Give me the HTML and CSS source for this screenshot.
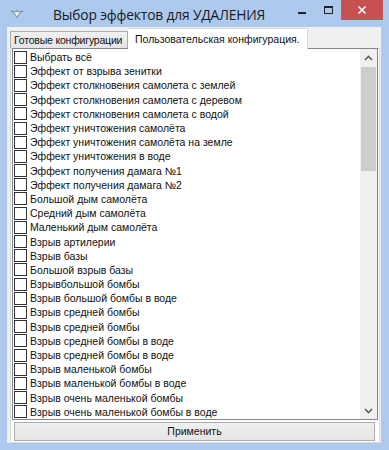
FILE: index.html
```html
<!DOCTYPE html>
<html>
<head>
<meta charset="utf-8">
<link rel="stylesheet" href="styles.css">
</head>
<body>
<div class="window">
  <div class="titlebar">
    <svg class="app-icon" width="14" height="10" viewBox="0 0 14 10">
      <path d="M1 2 L6 3 L7 1 L8 3 L13 2 L9 5 L7 9 L5 5 Z" fill="#e8eef6" stroke="#6b7c90" stroke-width="0.8"/>
    </svg>
    <div class="title">Выбор эффектов для УДАЛЕНИЯ</div>
    <div class="controls">
      <span class="btn-min"></span>
      <span class="btn-max"></span>
      <span class="btn-close">
        <svg width="10" height="10" viewBox="0 0 10 10"><path d="M1.5 1.5 L8.5 8.5 M8.5 1.5 L1.5 8.5" stroke="#fff" stroke-width="1.6"/></svg>
      </span>
    </div>
  </div>
  <div class="client">
    <div class="tabs">
      <div class="tab">Готовые конфигурации</div>
      <div class="tab active">Пользовательская конфигурация.</div>
    </div>
    <div class="panel">
      <div class="listbox">
        <div class="items">
          <div class="item"><span class="cb"></span>Выбрать всё</div>
          <div class="item"><span class="cb"></span>Эффект от взрыва зенитки</div>
          <div class="item"><span class="cb"></span>Эффект столкновения самолета с землей</div>
          <div class="item"><span class="cb"></span>Эффект столкновения самолета с деревом</div>
          <div class="item"><span class="cb"></span>Эффект столкновения самолета с водой</div>
          <div class="item"><span class="cb"></span>Эффект уничтожения самолёта</div>
          <div class="item"><span class="cb"></span>Эффект уничтожения самолёта на земле</div>
          <div class="item"><span class="cb"></span>Эффект уничтожения в воде</div>
          <div class="item"><span class="cb"></span>Эффект получения дамага №1</div>
          <div class="item"><span class="cb"></span>Эффект получения дамага №2</div>
          <div class="item"><span class="cb"></span>Большой дым самолёта</div>
          <div class="item"><span class="cb"></span>Средний дым самолёта</div>
          <div class="item"><span class="cb"></span>Маленький дым самолёта</div>
          <div class="item"><span class="cb"></span>Взрыв артилерии</div>
          <div class="item"><span class="cb"></span>Взрыв базы</div>
          <div class="item"><span class="cb"></span>Большой взрыв базы</div>
          <div class="item"><span class="cb"></span>Взрывбольшой бомбы</div>
          <div class="item"><span class="cb"></span>Взрыв большой бомбы в воде</div>
          <div class="item"><span class="cb"></span>Взрыв средней бомбы</div>
          <div class="item"><span class="cb"></span>Взрыв средней бомбы</div>
          <div class="item"><span class="cb"></span>Взрыв средней бомбы в воде</div>
          <div class="item"><span class="cb"></span>Взрыв средней бомбы в воде</div>
          <div class="item"><span class="cb"></span>Взрыв маленькой бомбы</div>
          <div class="item"><span class="cb"></span>Взрыв маленькой бомбы в воде</div>
          <div class="item"><span class="cb"></span>Взрыв очень маленькой бомбы</div>
          <div class="item"><span class="cb"></span>Взрыв очень маленькой бомбы в воде</div>
        </div>
        <div class="scrollbar">
          <div class="arrow up"><svg width="9" height="6" viewBox="0 0 9 6"><path d="M1 5 L4.5 1.5 L8 5" fill="none" stroke="#606060" stroke-width="1.6"/></svg></div>
          <div class="track">
            <div class="thumb"></div>
          </div>
          <div class="arrow down"><svg width="9" height="6" viewBox="0 0 9 6"><path d="M1 1 L4.5 4.5 L8 1" fill="none" stroke="#606060" stroke-width="1.6"/></svg></div>
        </div>
      </div>
      <div class="apply">Применить</div>
    </div>
  </div>
</div>
</body>
</html>
```
FILE: styles.css
```css
* { box-sizing: border-box; }
html, body { margin: 0; padding: 0; }
body {
  width: 389px;
  height: 450px;
  overflow: hidden;
  font-family: "Liberation Sans", Arial, sans-serif;
}
.window {
  width: 389px;
  height: 450px;
  background: #adcaee;
  display: flex;
  flex-direction: column;
}
.titlebar {
  height: 29px;
  display: flex;
  align-items: flex-start;
  position: relative;
}
.app-icon {
  margin: 9px 0 0 10px;
}
.title {
  margin: 5px 0 0 29px;
  font-family: "Open Sans", "Noto Sans", sans-serif;
  font-size: 13.8px;
  color: #1a1a1a;
  letter-spacing: -0.15px;
}
.controls {
  margin-left: auto;
  margin-right: 6px;
  display: flex;
  align-items: flex-start;
  height: 20px;
}
.btn-min {
  width: 8px;
  height: 2px;
  background: #222;
  margin: 12px 18px 0 0;
}
.btn-max {
  width: 9px;
  height: 8px;
  border: 1px solid #222;
  border-top-width: 2px;
  margin: 6px 8px 0 0;
}
.btn-close {
  width: 42px;
  height: 20px;
  background: #c75050;
  display: flex;
  align-items: center;
  justify-content: center;
}
.client {
  margin: 0 8px 7px 7px;
  flex: 1;
  background: #f0f0f0;
  display: flex;
  flex-direction: column;
  padding-left: 3px;
  padding-right: 1px;
}
.tabs {
  display: flex;
  align-items: flex-end;
  height: 21px;
  font-size: 10.5px;
  position: relative;
  z-index: 1;
}
.tab {
  height: 17px;
  padding: 2px 0 0 3px;
  width: 118px;
  background: linear-gradient(#f0f0f0, #e5e5e5);
  border: 1px solid #acacac;
  border-bottom: none;
  color: #111;
  white-space: nowrap;
  overflow: hidden;
  letter-spacing: -0.2px;
}
.tab.active {
  height: 21px;
  width: 180px;
  background: #fff;
  padding: 4px 0 0 7px;
  border-color: #d9d9d9;
  border-left: none;
  margin-bottom: -1px;
  letter-spacing: 0;
}
.panel {
  flex: 1;
  background: #fff;
  border: 1px solid #d9d9d9;
  display: flex;
  flex-direction: column;
  padding: 0 1px 1px 1px;
}
.listbox {
  height: 372px;
  border: 1px solid #828790;
  background: #fff;
  display: flex;
  margin-top: -1px;
}
.items {
  flex: 1;
  padding: 1px 0 0 0;
  overflow: hidden;
}
.item {
  height: 14.2px;
  display: flex;
  align-items: center;
  font-size: 10.5px;
  color: #111;
  white-space: nowrap;
}
.cb {
  width: 13px;
  height: 13px;
  border: 1px solid #333;
  background: #fff;
  margin: 0 3px 0 1px;
  flex-shrink: 0;
}
.scrollbar {
  width: 17px;
  background: #f0f0f0;
  display: flex;
  flex-direction: column;
}
.arrow {
  height: 17px;
  display: flex;
  align-items: center;
  justify-content: center;
}
.track {
  flex: 1;
  padding: 1px 1px;
}
.thumb {
  height: 104px;
  background: #cdcdcd;
}
.apply {
  height: 19px;
  margin: 2px 3px 0 2px;
  border: 1px solid #acacac;
  background: linear-gradient(#f0f0f0, #e5e5e5);
  font-size: 10.5px;
  text-align: center;
  line-height: 17px;
  color: #111;
}
```
